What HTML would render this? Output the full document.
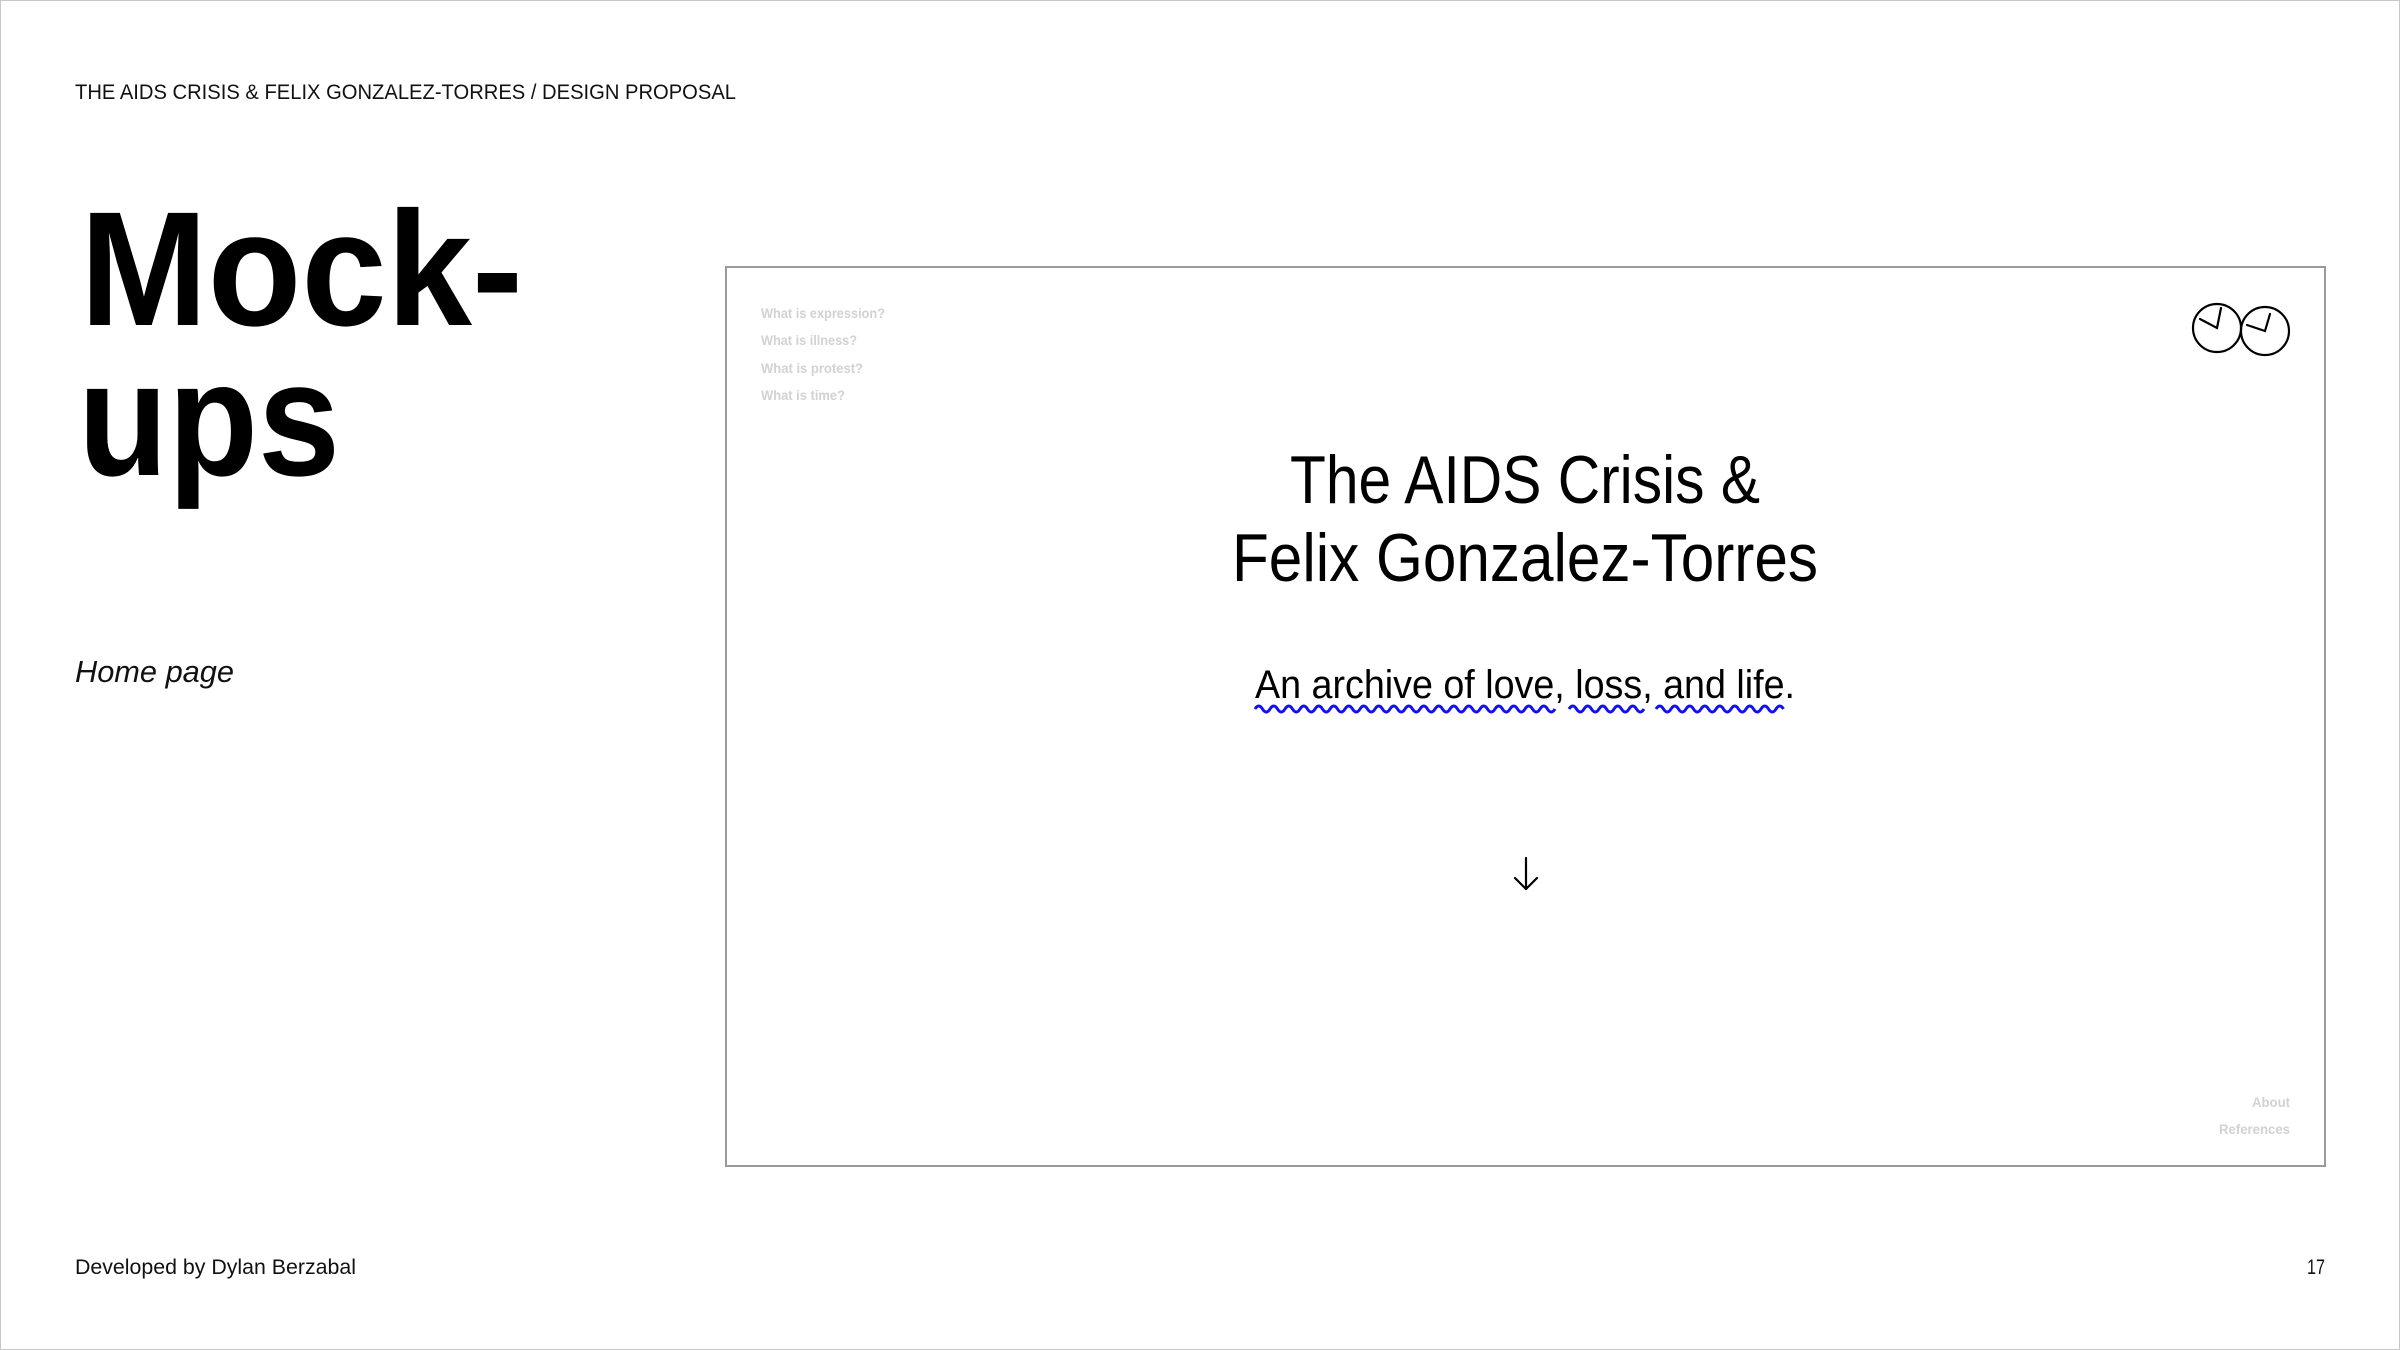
<!DOCTYPE html>
<html><head><meta charset="utf-8"><style>
html,body{margin:0;padding:0;background:#fff}
svg{display:block}
</style></head><body>
<svg width="2400" height="1350" viewBox="0 0 2400 1350" xmlns="http://www.w3.org/2000/svg" font-family="'Liberation Sans', sans-serif">
<rect x="0.5" y="0.5" width="2399" height="1349" fill="#fff" stroke="#c8c8c8" stroke-width="1"/>
<text x="75" y="99" font-size="21" fill="#111" textLength="661" lengthAdjust="spacingAndGlyphs">THE AIDS CRISIS &amp; FELIX GONZALEZ-TORRES / DESIGN PROPOSAL</text>
<text x="80" y="325" font-size="163" font-weight="bold" fill="#000" textLength="443" lengthAdjust="spacingAndGlyphs">Mock-</text>
<text x="78" y="475" font-size="163" font-weight="bold" fill="#000" textLength="262" lengthAdjust="spacingAndGlyphs">ups</text>
<text x="75" y="682" font-size="31" font-style="italic" fill="#111" textLength="159" lengthAdjust="spacingAndGlyphs">Home page</text>
<rect x="726" y="267" width="1599" height="899" fill="none" stroke="#9a9a9a" stroke-width="2"/>
<g font-size="14" font-weight="bold" fill="#d2d2d2">
<text x="761" y="318" textLength="124" lengthAdjust="spacingAndGlyphs">What is expression?</text>
<text x="761" y="345" textLength="96" lengthAdjust="spacingAndGlyphs">What is illness?</text>
<text x="761" y="373" textLength="102" lengthAdjust="spacingAndGlyphs">What is protest?</text>
<text x="761" y="400" textLength="84" lengthAdjust="spacingAndGlyphs">What is time?</text>
<text x="2290" y="1107" text-anchor="end" textLength="38" lengthAdjust="spacingAndGlyphs">About</text>
<text x="2290" y="1134" text-anchor="end" textLength="71" lengthAdjust="spacingAndGlyphs">References</text>
</g>
<g fill="none" stroke="#000" stroke-width="2.2" stroke-linecap="round">
<circle cx="2217" cy="328" r="24"/>
<circle cx="2265" cy="331" r="24"/>
<path d="M2221 308 L2217 328 L2200 319"/>
<path d="M2270 314 L2265 331 L2247 325"/>
</g>
<text x="1290" y="503" font-size="68" fill="#000" textLength="470" lengthAdjust="spacingAndGlyphs">The AIDS Crisis &amp;</text>
<text x="1232" y="581" font-size="68" fill="#000" textLength="586" lengthAdjust="spacingAndGlyphs">Felix Gonzalez-Torres</text>
<text x="1255" y="698" font-size="40" fill="#000" textLength="540" lengthAdjust="spacingAndGlyphs">An archive of love, loss, and life.</text>
<path d="M1255 709 q3.75 -6 7.5 0 t7.5 0 t7.5 0 t7.5 0 t7.5 0 t7.5 0 t7.5 0 t7.5 0 t7.5 0 t7.5 0 t7.5 0 t7.5 0 t7.5 0 t7.5 0 t7.5 0 t7.5 0 t7.5 0 t7.5 0 t7.5 0 t7.5 0 t7.5 0 t7.5 0 t7.5 0 t7.5 0 t7.5 0 t7.5 0 t7.5 0 t7.5 0 t7.5 0 t7.5 0 t7.5 0 t7.5 0 t7.5 0 t7.5 0 t7.5 0 t7.5 0 t7.5 0 t7.5 0 t7.5 0 t7.5 0" fill="none" stroke="#1010f0" stroke-width="3"/>
<path d="M1569 709 q3.75 -6 7.5 0 t7.5 0 t7.5 0 t7.5 0 t7.5 0 t7.5 0 t7.5 0 t7.5 0 t7.5 0 t7.5 0" fill="none" stroke="#1010f0" stroke-width="3"/>
<path d="M1656 709 q3.75 -6 7.5 0 t7.5 0 t7.5 0 t7.5 0 t7.5 0 t7.5 0 t7.5 0 t7.5 0 t7.5 0 t7.5 0 t7.5 0 t7.5 0 t7.5 0 t7.5 0 t7.5 0 t7.5 0 t7.5 0" fill="none" stroke="#1010f0" stroke-width="3"/>
<g fill="none" stroke="#000" stroke-width="2.2" stroke-linecap="round" stroke-linejoin="round">
<path d="M1526 858 L1526 889"/>
<path d="M1515 878 L1526 889 L1537 878"/>
</g>
<text x="75" y="1274" font-size="21" fill="#111" textLength="281" lengthAdjust="spacingAndGlyphs">Developed by Dylan Berzabal</text>
<text x="2325" y="1274" font-size="21" fill="#111" text-anchor="end" textLength="18" lengthAdjust="spacingAndGlyphs">17</text>
</svg>
</body></html>
